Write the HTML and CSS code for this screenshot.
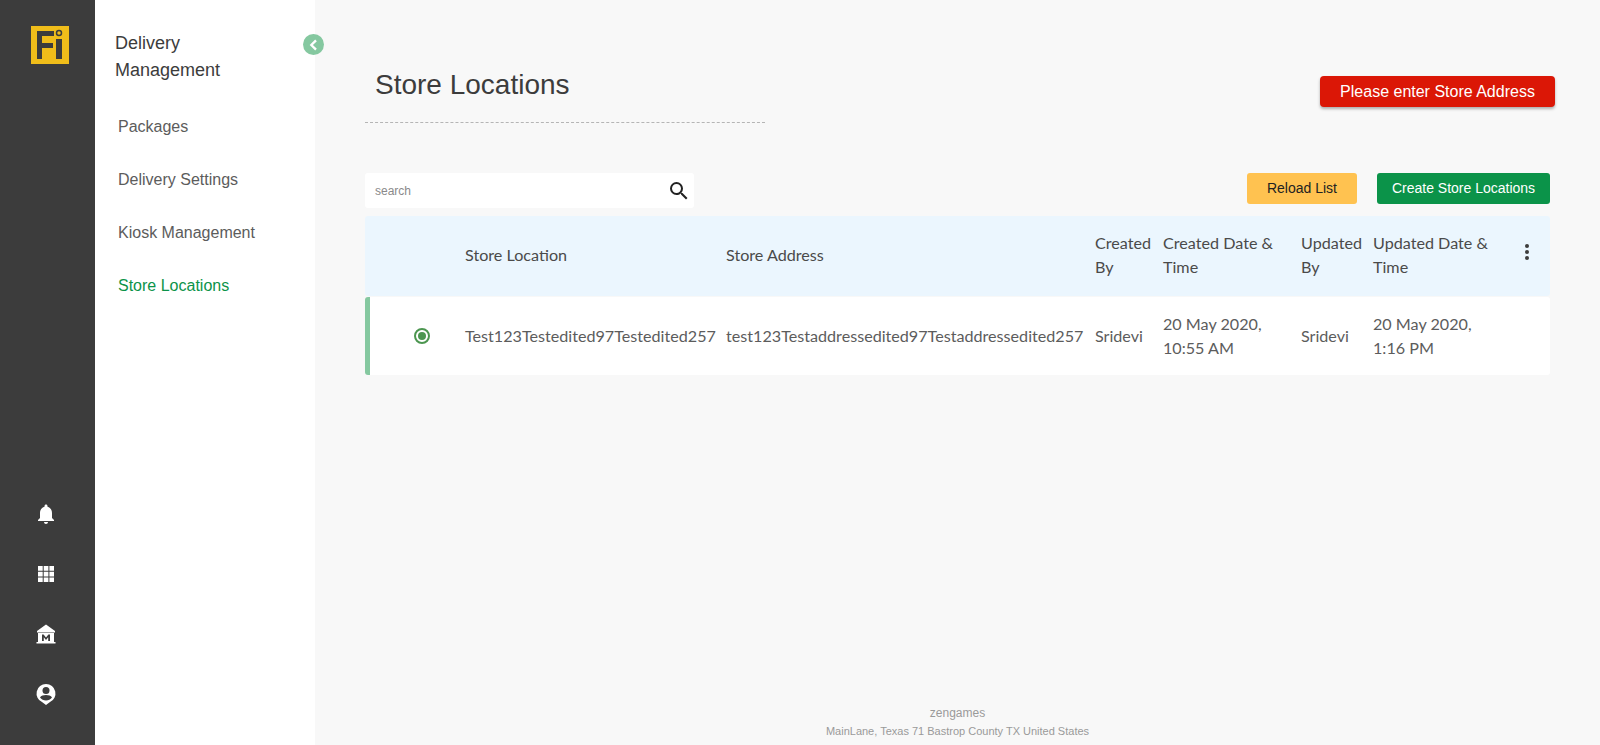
FILE: index.html
```html
<!DOCTYPE html>
<html lang="en">
<head>
  <meta charset="UTF-8">
  <title>Store Locations</title>
  <link rel="stylesheet" href="styles.css">
</head>
<body>
  <div class="rail">
    <svg class="logo" viewBox="0 0 38 38" width="38" height="38">
      <rect width="38" height="38" fill="#f0bd1a"/>
      <path d="M6 5h17v5H11v7h11v5H11v11H6z" fill="#3c3c3c"/>
      <rect x="25" y="13" width="6" height="20" fill="#3c3c3c"/>
      <circle cx="28" cy="7" r="2.500" fill="none" stroke="#3c3c3c" stroke-width="1.500"/>
    </svg>
    <div class="rail-icons">
      <svg viewBox="0 0 24 24" width="24" height="24"><path fill="#fff" d="M12 22c1.100 0 2-.9 2-2h-4c0 1.100.9 2 2 2zm6-6v-5c0-3.070-1.630-5.640-4.500-6.320V4c0-.83-.67-1.500-1.500-1.500s-1.500.67-1.500 1.500v.68C7.640 5.360 6 7.920 6 11v5l-2 2v1h16v-1l-2-2z"/></svg>
      <svg viewBox="0 0 24 24" width="24" height="24"><path fill="#fff" d="M4 4h4.700v4.700H4zm5.700 0h4.700v4.700H9.700zm5.700 0H20v4.700h-4.600zM4 9.700h4.700v4.700H4zm5.700 0h4.700v4.700H9.700zm5.700 0H20v4.700h-4.600zM4 15.400h4.700V20H4zm5.700 0h4.700V20H9.700zm5.700 0H20V20h-4.600z"/></svg>
      <svg viewBox="0 0 24 24" width="24" height="24"><path fill="#fff" d="M12 2.500 3 9v1.500h18V9L12 2.500zM4 11h16v9h1.500v1.500h-19V20H4v-9z"/><path fill="#3c3c3c" d="M8 19v-6.500h1.600L12 15.500l2.400-3H16V19h-1.800v-3.800L12 18l-2.200-2.800V19z"/></svg>
      <svg viewBox="0 0 24 24" width="24" height="24"><path fill="#fff" d="M12 2a9.500 9.500 0 0 0-4 18.100L12 23l4-2.900A9.500 9.500 0 0 0 12 2z"/><circle cx="12" cy="8.500" r="3.500" fill="#3c3c3c"/><path fill="#3c3c3c" d="M6 15.500c1-1.800 3.500-2.500 6-2.500s5 .7 6 2.500c-1.500 1.800-3.500 3-6 3s-4.500-1.200-6-3z"/></svg>
    </div>
  </div>

  <div class="sidebar">
    <h2>Delivery Management</h2>
    <button class="collapse-btn">
      <svg viewBox="0 0 24 24" width="16" height="16"><path d="M15 5l-7 7 7 7" fill="none" stroke="#fff" stroke-width="3.500"/></svg>
    </button>
    <ul class="side-menu">
      <li>Packages</li>
      <li>Delivery Settings</li>
      <li>Kiosk Management</li>
      <li class="active">Store Locations</li>
    </ul>
  </div>

  <div class="main-content">
    <div class="page-head">
      <div class="page-title"><h1>Store Locations</h1></div>
      <div class="alert-btn">Please enter Store Address</div>
    </div>

    <div class="toolbar">
      <div class="search-box">
        <input type="text" class="search-input" placeholder="search">
        <svg viewBox="0 0 24 24" width="24" height="24"><path fill="#222" d="M15.500 14h-.79l-.28-.27A6.470 6.470 0 0 0 16 9.500 6.500 6.500 0 1 0 9.500 16c1.610 0 3.090-.59 4.230-1.570l.27.28v.79l5 4.990L20.490 19l-4.990-5zm-6 0C7.010 14 5 11.990 5 9.500S7.010 5 9.500 5 14 7.010 14 9.500 11.990 14 9.500 14z"/></svg>
      </div>
      <div class="toolbar-btns">
        <button class="reload-btn">Reload List</button>
        <button class="create-btn">Create Store Locations</button>
      </div>
    </div>

    <div class="grid-row grid-head">
      <div></div>
      <div>Store Location</div>
      <div>Store Address</div>
      <div>Created By</div>
      <div>Created Date &amp; Time</div>
      <div>Updated By</div>
      <div class="date-cell">Updated Date &amp; Time</div>
      <div class="kebab"><i></i><i></i><i></i></div>
    </div>
    <div class="grid-row grid-item">
      <div class="radio"><span></span></div>
      <div>Test123Testedited97Testedited257</div>
      <div>test123Testaddressedited97Testaddressedited257</div>
      <div>Sridevi</div>
      <div class="date-cell">20 May 2020, 10:55 AM</div>
      <div>Sridevi</div>
      <div class="date-cell">20 May 2020, 1:16 PM</div>
      <div></div>
    </div>

    <div class="footer">
      <div class="footer-name">zengames</div>
      <div>MainLane, Texas 71 Bastrop County TX United States</div>
    </div>
  </div>
</body>
</html>
```

FILE: styles.css
```css
* {
  box-sizing: border-box;
}
body {
  font-family: "Liberation Sans", Arial, sans-serif;
  background-color: #f8f8f8;
  display: flex;
  margin: 0;
  height: 745px;
  overflow: hidden;
}
.rail {
  width: 95px;
  background-color: #3c3c3c;
  display: flex;
  flex-direction: column;
  align-items: center;
  padding-top: 26px;
  padding-bottom: 39px;
  justify-content: space-between;
}
.logo {
  display: block;
  margin-left: 5px;
}
.rail-icons {
  display: flex;
  flex-direction: column;
  gap: 36px;
  margin-right: 3px;
}
.rail-icons svg {
  display: block;
}
.sidebar {
  width: 220px;
  background-color: #fff;
  position: relative;
  padding: 30px 20px 0 20px;
}
.sidebar h2 {
  font-size: 18px;
  font-weight: normal;
  line-height: 27px;
  color: #3c3c3c;
  margin: 0;
  width: 120px;
}
.collapse-btn {
  position: absolute;
  top: 34px;
  right: -9px;
  width: 21px;
  height: 21px;
  border: none;
  border-radius: 50%;
  background-color: #85c8a0;
  padding: 0;
  display: flex;
  align-items: center;
  justify-content: center;
}
.side-menu {
  list-style: none;
  margin: 16px 0 0 0;
  padding: 0 0 0 3px;
}
.side-menu li {
  font-size: 16px;
  line-height: 53px;
  color: #5c5c5c;
}
.side-menu li.active {
  color: #0b9349;
}
.main-content {
  flex: 1;
  padding: 0 50px;
  position: relative;
}
.page-head {
  display: flex;
  justify-content: space-between;
  align-items: flex-start;
  height: 173px;
  padding-top: 68px;
}
.page-title {
  width: 400px;
  height: 55px;
  border-bottom: 1px dashed #b5b5b5;
  padding-left: 10px;
}
.page-title h1 {
  font-size: 28px;
  font-weight: normal;
  line-height: 34px;
  color: #3c3c3c;
  margin: 0;
}
.alert-btn {
  width: 235px;
  height: 31px;
  margin-top: 8px;
  margin-right: -5px;
  background-color: #db1706;
  color: #fff;
  font-size: 16px;
  line-height: 31px;
  text-align: center;
  border-radius: 4px;
  box-shadow: 0 2px 3px rgba(0, 0, 0, 0.3);
}
.toolbar {
  display: flex;
  justify-content: space-between;
  align-items: flex-start;
  height: 43px;
}
.search-box {
  width: 329px;
  height: 35px;
  background-color: #fff;
  border-radius: 3px;
  display: flex;
  align-items: center;
  padding: 0 3px 0 10px;
}
.search-input {
  flex: 1;
  border: none;
  outline: none;
  background: none;
  padding: 0;
  min-width: 0;
  font-family: "Liberation Sans", Arial, sans-serif;
  font-size: 12px;
}
.search-input::placeholder {
  color: #8a8a8a;
}
.toolbar-btns {
  display: flex;
  gap: 20px;
}
.toolbar-btns button {
  height: 31px;
  border: none;
  border-radius: 3px;
  font-family: "Liberation Sans", Arial, sans-serif;
  font-size: 14px;
  padding: 0 0 2px 0;
}
.reload-btn {
  width: 110px;
  background-color: #ffc250;
  color: #222;
}
.create-btn {
  width: 173px;
  background-color: #0b9349;
  color: #fff;
}
.grid-row {
  display: grid;
  grid-template-columns: 100px 261px 369px 68px 138px 72px 146px 1fr;
  align-items: center;
  font-family: Lato, sans-serif;
  font-size: 16.15px;
  line-height: 24px;
  border-radius: 3px;
}
.grid-head {
  height: 80px;
  background-color: #ebf6fe;
  color: #4a4a4a;
  margin-bottom: 1px;
  padding-bottom: 2px;
}
.grid-item {
  height: 78px;
  background-color: #fff;
  color: #5c5c5c;
  border-left: 5px solid #85c8a0;
  grid-template-columns: 95px 261px 369px 68px 138px 72px 146px 1fr;
}
.date-cell {
  padding-right: 20px;
}
.radio {
  display: flex;
  padding-left: 44px;
}
.radio span {
  display: block;
  width: 16px;
  height: 16px;
  border: 2px solid #4c9650;
  border-radius: 50%;
  padding: 2px;
  background-color: #4c9650;
  background-clip: content-box;
}
.kebab {
  display: flex;
  flex-direction: column;
  gap: 2px;
  align-items: center;
  margin-left: -15px;
  margin-top: -6px;
}
.kebab i {
  display: block;
  width: 4px;
  height: 4px;
  border-radius: 50%;
  background-color: #3c3c3c;
}
.footer {
  position: absolute;
  left: 0;
  right: 0;
  bottom: 5px;
  text-align: center;
  color: #9a9a9a;
  font-size: 11px;
  line-height: 18px;
}
.footer-name {
  font-size: 12px;
}
```
